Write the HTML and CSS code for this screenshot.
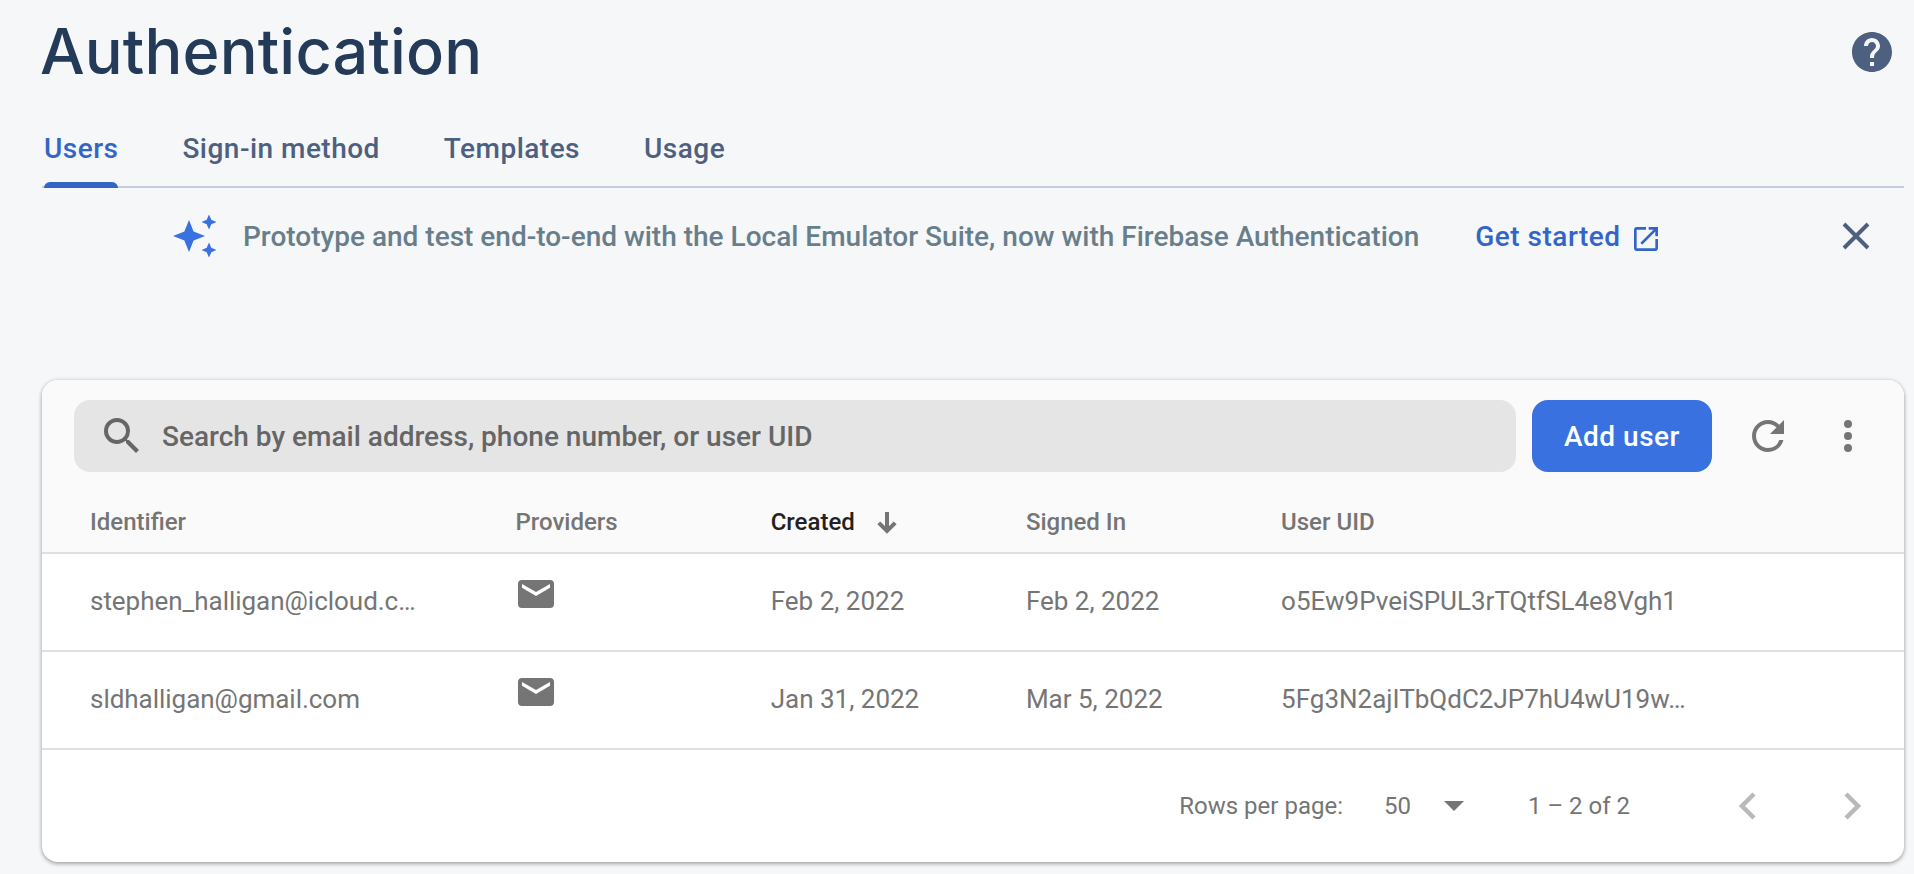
FILE: index.html
```html
<!DOCTYPE html>
<html lang="en">
<head>
<meta charset="utf-8">
<title>Authentication</title>
<link rel="stylesheet" href="styles.css">
</head>
<body>
<main class="page">
  <header class="page-header">
    <h1 class="title">Authentication</h1>
    <svg class="help" viewBox="2 2 20 20"><path d="M12 2C6.48 2 2 6.48 2 12s4.48 10 10 10 10-4.48 10-10S17.52 2 12 2zm1 17h-2v-2h2v2zm2.070-7.750l-.9.920C13.450 12.900 13 13.500 13 15h-2v-.5c0-1.100.450-2.100 1.170-2.830l1.240-1.260c.370-.360.590-.860.590-1.410 0-1.100-.9-2-2-2s-2 .9-2 2H8c0-2.210 1.790-4 4-4s4 1.790 4 4c0 .880-.360 1.680-.930 2.250z"/></svg>
  </header>

  <nav class="tabs">
    <a class="tab active">Users</a>
    <a class="tab">Sign-in method</a>
    <a class="tab">Templates</a>
    <a class="tab">Usage</a>
  </nav>

  <section class="banner">
    <svg class="spark" viewBox="0 0 44 44"><path d="M16 6L20.600 17.400L32 22L20.600 26.600L16 38L11.400 26.600L0 22L11.400 17.400ZM36 0.500L38.300 5.700L43.500 8L38.300 10.300L36 15.500L33.700 10.300L28.500 8L33.700 5.700ZM36 28.500L38.300 33.700L43.500 36L38.300 38.300L36 43.500L33.700 38.300L28.500 36L33.700 33.700Z"/></svg>
    <span class="banner-text">Prototype and test end-to-end with the Local Emulator Suite, now with Firebase Authentication</span>
    <a class="banner-link">Get started
      <svg class="open" viewBox="3 3 18 18"><path d="M19 19H5V5h7V3H5c-1.110 0-2 .9-2 2v14c0 1.100.890 2 2 2h14c1.100 0 2-.9 2-2v-7h-2v7zM14 3v2h3.590l-9.830 9.830 1.410 1.410L19 6.410V10h2V3h-7z"/></svg>
    </a>
    <svg class="close" viewBox="0 0 28 28"><path d="M2 2L26 26M26 2L2 26"/></svg>
  </section>

  <section class="card">
    <div class="toolbar">
      <div class="search">
        <svg class="icon" viewBox="0 0 24 24"><path d="M15.500 14h-.790l-.280-.270A6.471 6.471 0 0 0 16 9.500 6.500 6.500 0 1 0 9.500 16c1.610 0 3.090-.590 4.230-1.570l.270.280v.790l5 4.990L20.490 19l-4.990-5zm-6 0C7.010 14 5 11.990 5 9.500S7.010 5 9.500 5 14 7.010 14 9.500 11.990 14 9.500 14z"/></svg>
        <span>Search by email address, phone number, or user UID</span>
      </div>
      <button class="add">Add user</button>
      <svg class="icon refresh" viewBox="0 0 24 24"><path d="M17.650 6.350A7.958 7.958 0 0 0 12 4c-4.420 0-7.990 3.580-7.990 8s3.570 8 7.990 8c3.730 0 6.840-2.550 7.730-6h-2.080A5.990 5.990 0 0 1 12 18c-3.310 0-6-2.690-6-6s2.690-6 6-6c1.660 0 3.140.690 4.220 1.780L13 11h7V4l-2.350 2.350z"/></svg>
      <svg class="icon" viewBox="0 0 24 24"><circle cx="12" cy="6" r="2"/><circle cx="12" cy="12" r="2"/><circle cx="12" cy="18" r="2"/></svg>
    </div>

    <div class="row head">
      <span>Identifier</span>
      <span>Providers</span>
      <span class="sorted">Created
        <svg class="arrow" viewBox="0 0 20 22"><path d="M10 0V18.500M1.800 10.800L10 19L18.200 10.800"/></svg>
      </span>
      <span>Signed In</span>
      <span>User UID</span>
    </div>
    <div class="row">
      <span class="email">stephen_halligan@icloud.c…</span>
      <span class="provider"><svg class="mail" viewBox="0 0 36 28"><path d="M4 0H32Q36 0 36 4V24Q36 28 32 28H4Q0 28 0 24V4Q0 0 4 0ZM4 4V7.800L18 16L32 7.800V4L18 12Z"/></svg></span>
      <span>Feb 2, 2022</span>
      <span>Feb 2, 2022</span>
      <span>o5Ew9PveiSPUL3rTQtfSL4e8Vgh1</span>
    </div>
    <div class="row">
      <span class="email">sldhalligan@gmail.com</span>
      <span class="provider"><svg class="mail" viewBox="0 0 36 28"><path d="M4 0H32Q36 0 36 4V24Q36 28 32 28H4Q0 28 0 24V4Q0 0 4 0ZM4 4V7.800L18 16L32 7.800V4L18 12Z"/></svg></span>
      <span>Jan 31, 2022</span>
      <span>Mar 5, 2022</span>
      <span>5Fg3N2ajITbQdC2JP7hU4wU19w…</span>
    </div>

    <footer class="pager">
      <span class="per-page">Rows per page:</span>
      <span class="size">50</span>
      <svg class="caret" viewBox="0 0 20 10"><path d="M0 0H20L10 10Z"/></svg>
      <span class="range">1 – 2 of 2</span>
      <svg class="chev prev" viewBox="0 0 18 28"><path d="M16 2L4 14L16 26"/></svg>
      <svg class="chev" viewBox="0 0 18 28"><path d="M2 2L14 14L2 26"/></svg>
    </footer>
  </section>
</main>
</body>
</html>
```
FILE: styles.css
```css
* {
  box-sizing: border-box;
}

body {
  margin: 0;
  height: 874px;
  overflow: hidden;
  background: #f6f7f9;
  font-family: Roboto, "Liberation Sans", sans-serif;
}

svg {
  display: block;
  flex: none;
}

.page {
  padding: 0 10px 0 42px;
}

.page-header {
  display: flex;
  align-items: center;
  justify-content: space-between;
  height: 104px;
  padding-right: 12px;
}

.title {
  margin: 0 0 2px -2px;
  color: #233a59;
  font-family: Inter, Roboto, sans-serif;
  font-size: 63px;
  font-weight: 500;
  line-height: 80px;
  letter-spacing: 0.150px;
}

.help {
  width: 40px;
  height: 40px;
  fill: #4e6080;
}

.tabs {
  display: flex;
  gap: 64px;
  height: 84px;
  padding-left: 2px;
  border-bottom: 2px solid #c5cddd;
}

.tab {
  display: flex;
  flex-direction: column;
  justify-content: space-between;
  height: 84px;
  padding-top: 28px;
  color: #4e6080;
  font-size: 28px;
  font-weight: 500;
  line-height: 34px;
  letter-spacing: 0.480px;
}

.tab.active {
  color: #3365c9;
}

.tab.active::after {
  content: "";
  height: 6px;
  border-radius: 6px 6px 0 0;
  background: #3365c9;
}

.banner {
  display: flex;
  align-items: center;
  height: 96px;
  margin-bottom: 96px;
  padding: 0 34px 0 131px;
  font-size: 28px;
  font-weight: 500;
}

.spark {
  width: 44px;
  height: 44px;
  fill: #3971e0;
}

.banner-text {
  margin-left: 26px;
  color: #687f8b;
  white-space: nowrap;
}

.banner-link {
  display: flex;
  align-items: center;
  gap: 13px;
  margin-left: 56px;
  color: #3365c9;
  letter-spacing: 0.5px;
  white-space: nowrap;
}

.open {
  width: 24px;
  height: 24px;
  margin-top: 6px;
  fill: currentColor;
}

.close {
  width: 28px;
  height: 28px;
  margin-left: auto;
  fill: none;
  stroke: #4e6080;
  stroke-width: 3.9;
}

.card {
  height: 482px;
  overflow: hidden;
  border-radius: 16px;
  background: #fff;
  box-shadow: 0 2px 4px rgba(0, 0, 0, 0.28), 0 0 4px rgba(0, 0, 0, 0.14);
}

.toolbar {
  display: flex;
  align-items: center;
  height: 112px;
  padding: 0 32px;
  background: #fafafa;
}

.icon {
  width: 48px;
  height: 48px;
  fill: #757575;
}

.search {
  display: flex;
  align-items: center;
  gap: 16px;
  width: 1442px;
  height: 72px;
  padding-left: 24px;
  border-radius: 16px;
  background: #e5e5e5;
  color: #666;
  font-size: 28px;
  font-weight: 500;
}

.search .icon {
  fill: #666;
}

.add {
  width: 180px;
  height: 72px;
  margin-left: 16px;
  padding: 0;
  border: 0;
  border-radius: 16px;
  background: #3971e0;
  color: #fff;
  font: 500 28px Roboto, sans-serif;
  letter-spacing: 0.5px;
}

.refresh {
  margin: 0 32px;
}

.row {
  display: grid;
  grid-template-columns: 425.500px 255.200px 255.200px 255.200px 1fr;
  align-items: center;
  height: 98px;
  padding: 0 0 2px 48px;
  border-bottom: 2px solid #e0e0e0;
  color: #757575;
  font-size: 26px;
  line-height: 32px;
  white-space: nowrap;
}

.row.head {
  height: 62px;
  padding-bottom: 0;
  background: #fafafa;
  font-size: 24px;
  font-weight: 500;
}

.email {
  letter-spacing: -0.030px;
}

.sorted {
  display: flex;
  align-items: center;
  gap: 22px;
  color: #212121;
}

.arrow {
  width: 20px;
  height: 22px;
  margin-top: 2px;
  fill: none;
  stroke: #757575;
  stroke-width: 4;
}

.provider {
  padding: 0 0 14px 2px;
}

.mail {
  width: 36px;
  height: 28px;
  fill: #757575;
  fill-rule: evenodd;
}

.pager {
  display: flex;
  align-items: center;
  justify-content: flex-end;
  height: 112px;
  padding-right: 42px;
  color: #757575;
  font-size: 24px;
}

.size {
  margin-left: 41px;
}

.caret {
  width: 20px;
  height: 10px;
  margin-left: 33px;
  fill: #757575;
}

.range {
  margin-left: 64px;
}

.chev {
  width: 18px;
  height: 28px;
  fill: none;
  stroke: #b9b9b9;
  stroke-width: 4.500;
}

.prev {
  margin: 0 88px 0 108px;
}
```
